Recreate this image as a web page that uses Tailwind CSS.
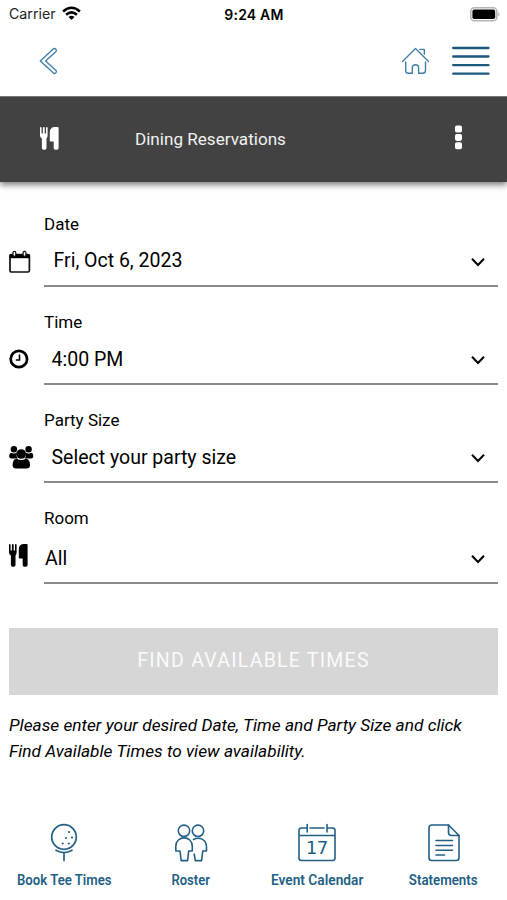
<!DOCTYPE html>
<html lang="en">
<head>
<meta charset="utf-8">
<title>Dining Reservations</title>
<script src="https://cdn.jsdelivr.net/npm/@tailwindcss/browser@4"></script>
</head>
<body class="bg-white">
<svg class="hidden">
  <symbol id="utensils" viewBox="0 0 19 23">
    <path d="M0 1Q0 0 .8 0T1.6 1V6.5H2.9V1Q2.9 0 3.8 0T4.7 1V6.5H6V1Q6 0 6.8 0T7.6 1V8.5Q7.6 10.6 6.5 11.6V21Q6.5 22.7 4.8 22.7H3.6Q1.9 22.7 1.9 21V11.6Q0 10.6 0 8.5Z"/>
    <path d="M18.6 1V21Q18.6 22.7 16.9 22.7H15.4Q13.7 22.7 13.7 21V14.5H10.6Q9.8 14.5 9.8 13.7V5.5Q9.8 0 15 0H17.6Q18.6 0 18.6 1Z"/>
  </symbol>
  <symbol id="chevron" viewBox="0 0 14 10"><path d="M1 1.8 7 8 13 1.8" fill="none" stroke="currentColor" stroke-width="2"/></symbol>
</svg>
<div class="flex h-[900px] w-[507px] flex-col overflow-hidden bg-white font-['Roboto','Liberation_Sans',sans-serif] text-black">
  <div class="grid h-7 shrink-0 grid-cols-3 items-center pr-[7px] pl-[9px] font-['Inter','Liberation_Sans',sans-serif] text-[14px]">
    <div class="flex items-center gap-[6px] text-[#222]"><span class="text-[14.2px]">Carrier</span>
      <svg class="-mt-[1px]" width="19" height="15" viewBox="0 0 19 15" fill="none" stroke="#000" stroke-width="2.5"><path d="M1.1 5.5Q9.5-2 17.9 5.5M4.1 8.8Q9.5 4 14.9 8.8"/><path d="M9.5 14 6.5 10.9Q9.5 8.5 12.5 10.9Z" fill="#000" stroke="none"/></svg>
    </div>
    <div class="-ml-[1px] text-center font-semibold tracking-[0.2px] whitespace-nowrap">9:24 AM</div>
    <svg class="-mr-[1px] justify-self-end" width="31" height="15" viewBox="0 0 31 15"><rect x=".8" y=".8" width="26" height="13" rx="3.6" fill="#fff" stroke="#b5b5b5" stroke-width="1.6"/><rect x="2.4" y="2.6" width="22.8" height="9.4" rx="1.8"/><path d="M28.3 5.2Q30.6 7.3 28.3 9.4Z" fill="#aaa"/></svg>
  </div>
  <div class="flex h-[68px] shrink-0 items-center pr-[17px] pl-[39px] text-[#235f85]">
    <svg class="-mt-[2px]" width="20" height="28" viewBox="0 0 20 28" fill="none" stroke="#427fa6" stroke-width="1.4" stroke-linejoin="round"><path d="M1.3 14 14.5 1.7Q15.6 1 16.7 2.1 18 3.4 17 4.5L6.6 14 17 23.5Q18 24.6 16.9 25.8 15.6 27 14.5 26.1Z"/></svg>
    <svg class="-mt-[2px] mr-[22px] ml-auto" width="29" height="28" viewBox="0 0 29 28" fill="none" stroke="#427fa6" stroke-width="1.4" stroke-linecap="round" stroke-linejoin="round"><path d="M1.5 14.5 14.5 1.5 27.5 14.5M4.7 15V23.5Q4.7 26.3 7.3 26.3H11.3V20.7Q11.3 17.8 14.4 17.8T17.6 20.7V26.3H21.5Q24.5 26.3 24.5 23.5V15M18.8 2.4H23.3V7.2"/></svg>
    <svg class="-mt-[3px]" width="38" height="30" viewBox="0 0 38 30" stroke="#1d587d" stroke-width="2.3" stroke-linecap="round"><path d="M1.2 2H36.5M1.2 10.5H36.5M1.2 19.2H36.5M1.2 27.7H36.5"/></svg>
  </div>
  <header class="flex h-[86px] shrink-0 items-center border-t border-[#777] bg-[#424242] pr-[44px] pl-[40px] text-[#f1f1f1] shadow-[0_3px_6px_rgba(0,0,0,0.5)] [clip-path:inset(0_0_-14px_0)]">
    <svg class="-mt-[3px] fill-white" width="19" height="23"><use href="#utensils"/></svg>
    <h1 class="-mt-[2px] ml-[76px] text-[17.1px] leading-6 whitespace-nowrap">Dining Reservations</h1>
    <svg class="-mt-[5px] ml-auto fill-white" width="9" height="25" viewBox="0 0 9 25"><rect x="1" y=".5" width="7" height="7" rx="1.8"/><rect x="1" y="8.9" width="7" height="7" rx="1.8"/><rect x="1" y="17.3" width="7" height="7" rx="1.8"/></svg>
  </header>

  <main class="flex flex-col px-[9px] pt-[32px]">
    <div class="flex flex-col gap-[25px]">
      <div class="flex flex-col">
        <label class="ml-[35px] text-[17px] leading-5">Date</label>
        <div class="flex h-[53px]">
          <div class="flex w-[35px] items-center pt-[3px]">
            <svg width="22" height="24" viewBox="0 0 22 24"><rect x="1" y="4.5" width="19.4" height="17.5" rx="1.6" fill="none" stroke="#111" stroke-width="1.7"/><path d="M.5 4.5H20.9V8.2H.5Z"/><rect x="4" y="1.3" width="2.8" height="5" rx="1.4" fill="#fff" stroke="#111" stroke-width="1.2"/><rect x="14.1" y="1.3" width="2.8" height="5" rx="1.4" fill="#fff" stroke="#111" stroke-width="1.2"/></svg>
          </div>
          <div class="flex flex-1 items-center border-b-2 border-[#8a8a8a] pt-[2px] pr-[13px] pl-[9.5px] text-[19.5px]"><span class="flex-1">Fri, Oct 6, 2023</span><svg class="mt-[3px]" width="14" height="10"><use href="#chevron"/></svg></div>
        </div>
      </div>
      <div class="flex flex-col">
        <label class="ml-[35px] text-[17px] leading-5">Time</label>
        <div class="flex h-[53px]">
          <div class="flex w-[35px] items-center pt-[1px]">
            <svg width="20" height="20" viewBox="0 0 20 20" fill="none" stroke="#000"><circle cx="9.9" cy="10" r="8.2" stroke-width="2.7"/><path d="M10.5 5.5V11H6.8" stroke-width="1.6"/></svg>
          </div>
          <div class="flex flex-1 items-center border-b-2 border-[#8a8a8a] pt-[2px] pr-[13px] pl-[7.5px] text-[19.5px]"><span class="flex-1 pt-[2px]">4:00 PM</span><svg class="mt-[3px]" width="14" height="10"><use href="#chevron"/></svg></div>
        </div>
      </div>
      <div class="flex flex-col">
        <label class="ml-[35px] text-[17px] leading-5">Party Size</label>
        <div class="flex h-[53px]">
          <div class="flex w-[35px] items-center pt-[2px]">
            <svg width="25" height="23" viewBox="0 0 25 23"><circle cx="4.9" cy="3.3" r="3.2"/><circle cx="19.6" cy="3.3" r="3.2"/><path d="M2 6.8Q5 8.4 8 6.6 6.8 10 8.8 12.5H2.4Q.2 12.5.2 10.5 .2 7.2 2 6.8M22.5 6.8Q19.5 8.4 16.5 6.6 17.7 10 15.7 12.5H22.1Q24.3 12.5 24.3 10.5 24.3 7.2 22.5 6.8"/><circle cx="12.25" cy="8" r="4.8"/><path d="M7.6 12.8Q12.2 15.2 16.9 12.8 21 13.2 21 19 21 22.5 17.6 22.5H7Q3.6 22.5 3.6 19 3.6 13.2 7.6 12.8Z"/></svg>
          </div>
          <div class="flex flex-1 items-center border-b-2 border-[#8a8a8a] pt-[2px] pr-[13px] pl-[7.5px] text-[19.5px]"><span class="flex-1 pt-[2px]">Select your party size</span><svg class="mt-[3px]" width="14" height="10"><use href="#chevron"/></svg></div>
        </div>
      </div>
      <div class="flex flex-col">
        <label class="ml-[35px] text-[17px] leading-5">Room</label>
        <div class="flex h-[56px]">
          <div class="flex w-[35px] items-center pb-[2px]"><svg width="19" height="23"><use href="#utensils"/></svg></div>
          <div class="flex flex-1 items-center border-b-2 border-[#8a8a8a] pt-[6px] pr-[13px] pl-[1px] text-[19.5px]"><span class="flex-1 pt-[1px]">All</span><svg class="mt-[2px]" width="14" height="10"><use href="#chevron"/></svg></div>
        </div>
      </div>
    </div>
    <button class="mt-[44px] h-[67px] w-[489px] bg-[#d6d6d6] pb-[2px] text-[19.5px] tracking-[1.25px] text-[#fafafa]">FIND AVAILABLE TIMES</button>
    <p class="mt-[18px] text-[17.27px] leading-[25.5px] whitespace-nowrap italic">Please enter your desired Date, Time and Party Size and click<br>Find Available Times to view availability.</p>
  </main>

  <nav class="mt-auto grid h-[78px] shrink-0 grid-cols-4 text-[14px] font-semibold text-[#235f85]">
    <div class="flex flex-col items-center gap-[8px] pl-[1px]">
      <svg width="28" height="40" viewBox="0 0 28 40" fill="none" stroke="currentColor" stroke-width="1.7" stroke-linecap="round"><circle cx="14" cy="15" r="12.3"/><path d="M6 28.3Q14 33 22 28.3M14 31V38.5"/><g fill="currentColor" stroke="none"><circle cx="19" cy="10" r="1.1"/><circle cx="16" cy="16" r="1.1"/><circle cx="22" cy="15.5" r="1.1"/><circle cx="12.7" cy="21.5" r="1.1"/><circle cx="18.8" cy="21.5" r="1.1"/></g></svg>
      <span class="scale-x-[0.94] leading-5 whitespace-nowrap">Book Tee Times</span>
    </div>
    <div class="flex flex-col items-center gap-[8px] pl-[1px]">
      <svg width="34" height="40" viewBox="0 0 34 40" fill="none" stroke="currentColor" stroke-width="1.6" stroke-linejoin="round" stroke-linecap="round"><circle cx="10" cy="8.8" r="5.7"/><circle cx="24" cy="8.8" r="5.7"/><path d="M6 29H1.8V24.5C1.8 13 18.3 13 18.3 24.5V29H14.7L13.6 38.6H7.2ZM19.5 17.5C25 14.5 32.5 17 32.5 25V29H28.8L27.6 38.6H21.3L20.2 32"/></svg>
      <span class="scale-x-[0.93] leading-5 whitespace-nowrap">Roster</span>
    </div>
    <div class="flex flex-col items-center gap-[8px]">
      <svg width="38" height="40" viewBox="0 0 38 40" fill="none" stroke="currentColor" stroke-width="1.6" stroke-linecap="round"><path d="M8 6H3.5Q1 6 1 8.5V36Q1 38.5 3.5 38.5H34.5Q37 38.5 37 36V8.5Q37 6 34.5 6H30M12 6H26M1 13.5H37M9.2 2.5V10M29 2.5V10"/><text x="19" y="31.6" text-anchor="middle" fill="currentColor" stroke="none" font-family="DejaVu Sans Mono, monospace" font-size="18.5" font-weight="400">17</text></svg>
      <span class="scale-x-[0.98] leading-5 whitespace-nowrap">Event Calendar</span>
    </div>
    <div class="flex flex-col items-center gap-[8px]">
      <svg width="32" height="40" viewBox="0 0 32 40" fill="none" stroke="currentColor" stroke-width="1.6" stroke-linejoin="round" stroke-linecap="round"><path d="M20.5 3H3.8Q1 3 1 5.8V35.7Q1 38.5 3.8 38.5H28.2Q31 38.5 31 35.7V13.5Z"/><path d="M20.5 3V10.5Q20.5 13.5 23.5 13.5H31M8 18.5H24.5M8 23.5H24.5M8 28.2H24.5M8 33H16.5"/></svg>
      <span class="scale-x-[0.95] leading-5 whitespace-nowrap">Statements</span>
    </div>
  </nav>
</div>
</body>
</html>
